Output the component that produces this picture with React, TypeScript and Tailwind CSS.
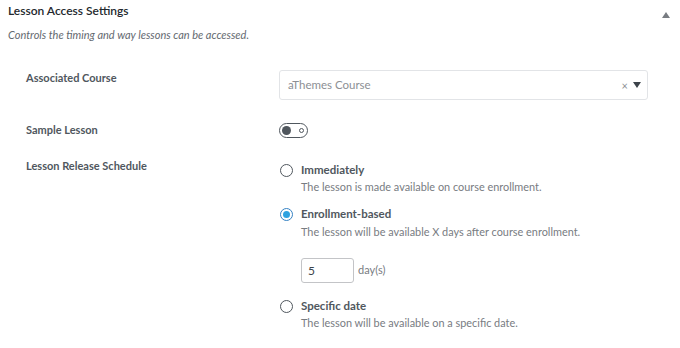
import React from "react";

const font = { fontFamily: 'Lato, "Open Sans", sans-serif' };

function Radio({ checked }: { checked?: boolean }) {
  return (
    <span
      className={
        "flex h-[13px] w-[13px] shrink-0 items-center justify-center rounded-full border " +
        (checked ? "border-[#3582c4]" : "border-[#50575e]")
      }
    >
      {checked && <span className="h-[7px] w-[7px] rounded-full bg-[#2ea2e0]" />}
    </span>
  );
}

function OptionHead({ checked, title }: { checked?: boolean; title: string }) {
  return (
    <div className="flex h-[18px] items-center gap-[8px]">
      <Radio checked={checked} />
      <span className="text-[11.5px] font-bold text-[#50575e]">{title}</span>
    </div>
  );
}

function Desc({ children }: { children: React.ReactNode }) {
  return <div className="pl-[21px] text-[10.9px] leading-[16px] text-[#787c82]">{children}</div>;
}

export default function App() {
  return (
    <div className="h-[348px] w-[680px] bg-white text-[#3c434a]" style={font}>
      <div className="flex h-[21px] items-center justify-between pl-[8px] pr-[10px] pt-[1px]">
        <span className="text-[12px] font-semibold text-[#23282d]">Lesson Access Settings</span>
        <svg width="8" height="6" viewBox="0 0 8 6" className="mt-[8px]">
          <path d="M4 0L8 6H0z" fill="#787c82" />
        </svg>
      </div>
      <div className="mt-[6px] pl-[8px] text-[11px] italic leading-[16px] text-[#646970]">
        Controls the timing and way lessons can be accessed.
      </div>

      <div className="mt-[27px] pl-[26px] pr-[32px]">
        <div className="flex">
          <div className="w-[253px] pt-[1px] text-[11px] font-bold leading-[14px] text-[#50575e]">
            Associated Course
          </div>
          <div className="flex h-[30px] flex-1 items-center justify-between rounded-[3px] border border-[#e2e4e7] pl-[8px] pr-[6px]">
            <span className="text-[11.5px] text-[#8c8f94]">aThemes Course</span>
            <span className="flex items-center gap-[5px]">
              <span className="text-[11px] leading-none text-[#8c8f94]">×</span>
              <svg width="8" height="6" viewBox="0 0 8 6">
                <path d="M0 0H8L4 6z" fill="#3c434a" />
              </svg>
            </span>
          </div>
        </div>

        <div className="mt-[23px] flex">
          <div className="w-[253px] text-[11px] font-bold leading-[14px] text-[#50575e]">
            Sample Lesson
          </div>
          <div className="flex h-[15px] w-[29px] items-center justify-between rounded-full border-[1.5px] border-[#50575e] px-[2px]">
            <span className="h-[9px] w-[9px] rounded-full bg-[#50575e]" />
            <span className="mr-[1px] h-[5px] w-[5px] rounded-full border border-[#50575e]" />
          </div>
        </div>

        <div className="mt-[21px] flex">
          <div className="w-[253px] text-[11px] font-bold leading-[14px] text-[#50575e]">
            Lesson Release Schedule
          </div>
          <div className="flex flex-col pl-[1px] pt-[2px]">
            <OptionHead title="Immediately" />
            <Desc>The lesson is made available on course enrollment.</Desc>
            <div className="mt-[10px]">
              <OptionHead checked title="Enrollment-based" />
            </div>
            <div className="mt-[1px]">
              <Desc>The lesson will be available X days after course enrollment.</Desc>
            </div>
            <div className="ml-[21px] mt-[18px] flex items-center gap-[4px]">
              <div className="flex h-[25px] w-[53px] items-center rounded-[3px] border border-[#c3c4c7] pl-[6px] text-[12px] text-[#3c434a]">
                5
              </div>
              <span className="text-[11px] text-[#787c82]">day(s)</span>
            </div>
            <div className="mt-[14px]">
              <OptionHead title="Specific date" />
            </div>
            <Desc>The lesson will be available on a specific date.</Desc>
          </div>
        </div>
      </div>
    </div>
  );
}
